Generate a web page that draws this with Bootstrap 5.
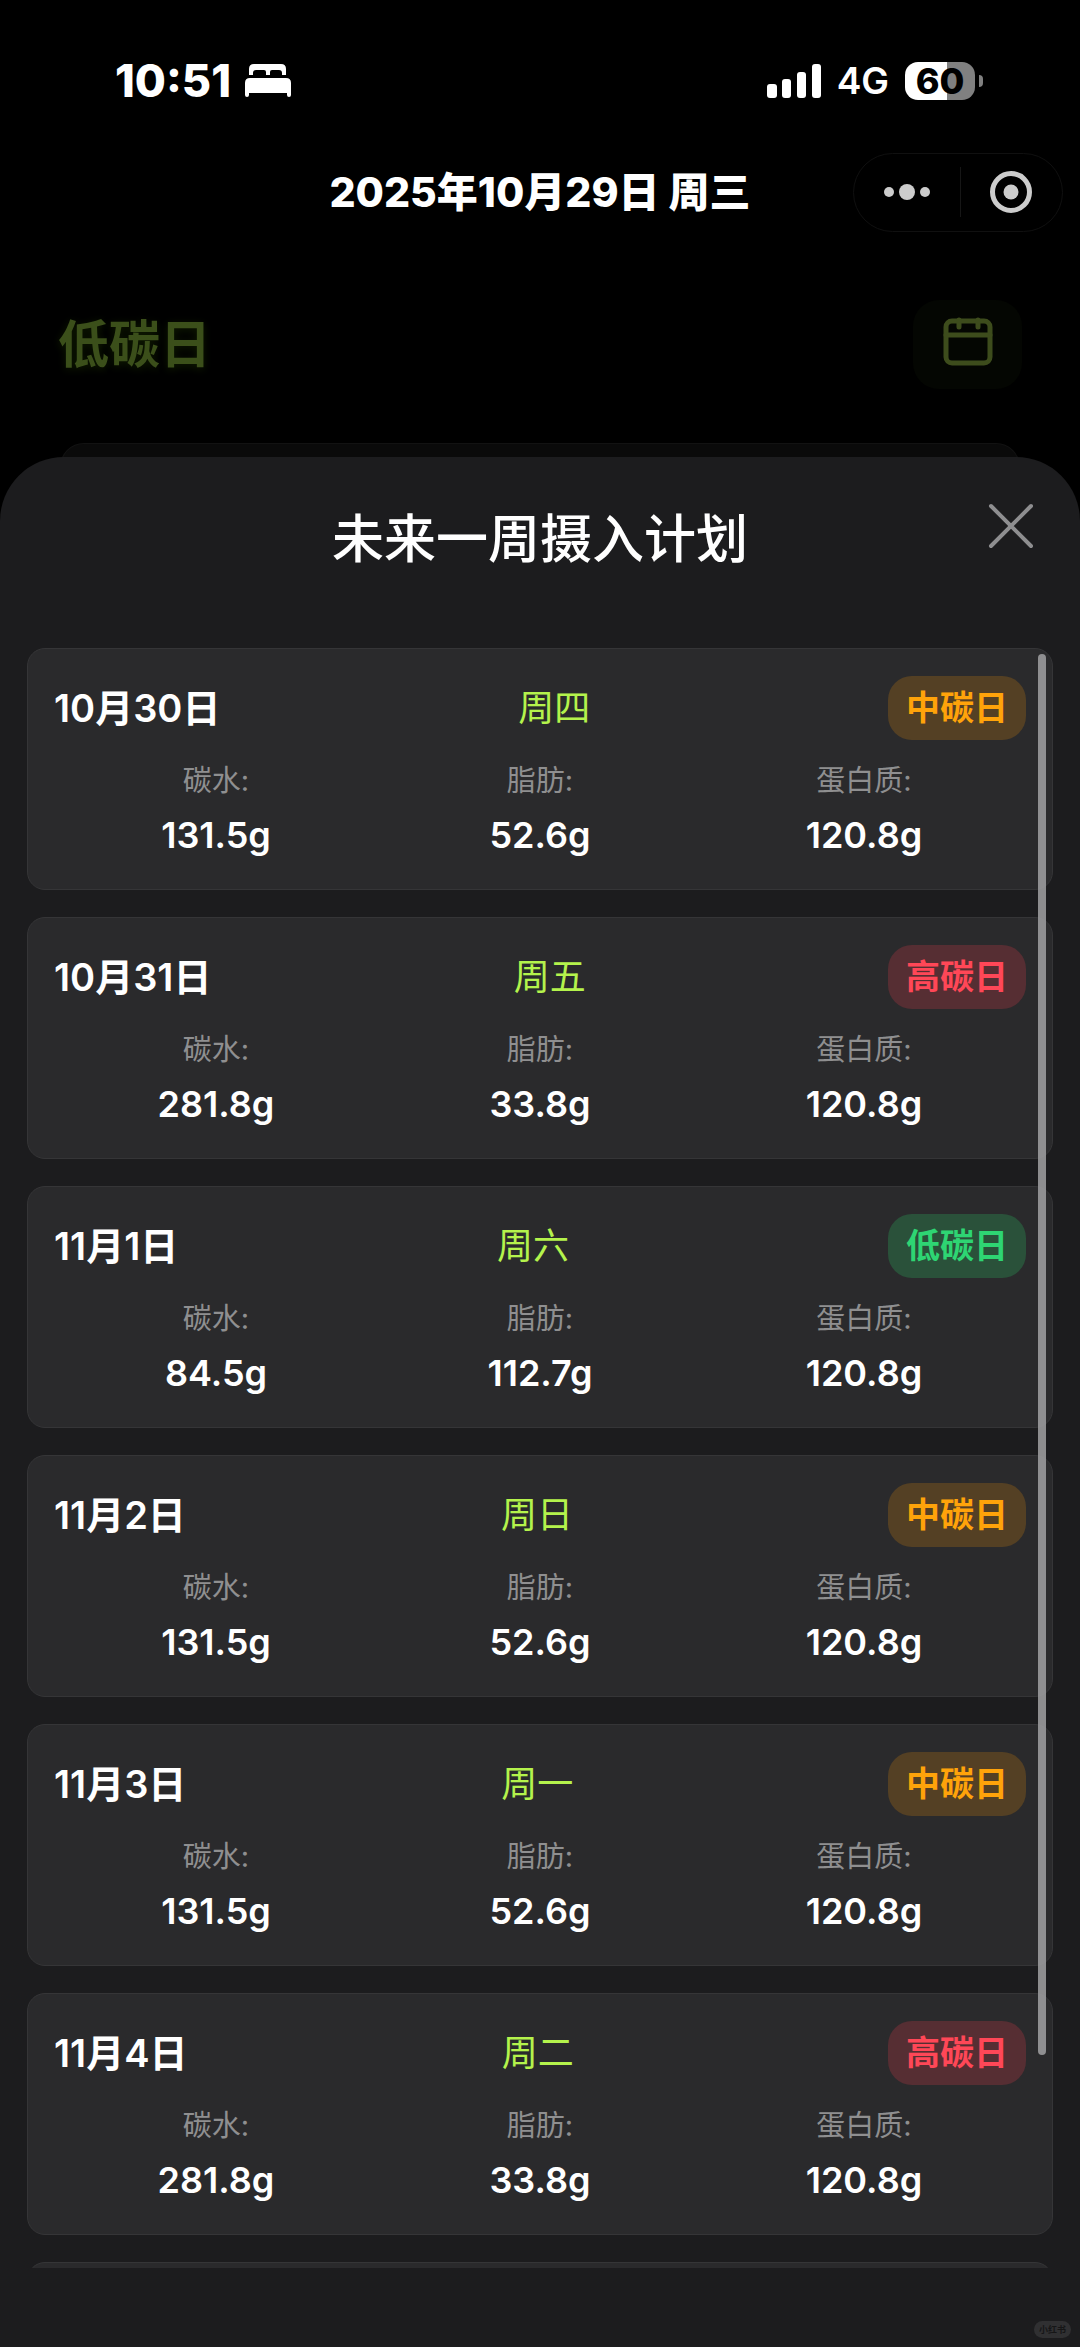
<!DOCTYPE html>
<html lang="zh-CN">
<head>
<meta charset="utf-8">
<meta name="viewport" content="width=device-width, initial-scale=1">
<title>未来一周摄入计划</title>
<link href="https://cdn.jsdelivr.net/npm/bootstrap@5.3.0/dist/css/bootstrap.min.css" rel="stylesheet">
<style>
body{background:#000;color:#fff;font-family:Inter,"Noto Sans CJK SC",sans-serif;font-size:36px;line-height:54px}
button{line-height:1}
.status-bar{height:152px;padding:9px 97px 0 115px}
.clock-group{gap:13px}
.clock{font-size:45px;font-weight:800}
.network{font-size:37px;font-weight:600}
.battery-level{width:70px;height:38px;border-radius:13px;background:linear-gradient(90deg,#fff 60%,#808080 60%);color:#000;font-size:36px;line-height:38px;font-weight:800}
.battery-tip{width:4px;height:12px;border-radius:0 4px 4px 0;background:#808080}
.top-bar{height:80px;padding-right:17px}
.top-bar h1{font-size:41px;line-height:54px;font-weight:800}
.capsule{width:210px;height:79px;border:1px solid #101010;border-radius:40px}
.capsule-line{width:1px;height:50px;background:#161616}
.plain-btn{background:none;border:0;padding:0}
.day-row{padding:68px 58px 0 58px}
.day-row h2{font-size:51px;line-height:78px;font-weight:600;color:#3b4f1a;text-shadow:0 2px 8px rgba(40,70,0,.4)}
.calendar-btn{width:109px;height:89px;border:0;border-radius:26px;background:#040602}
.calendar-btn svg{margin-bottom:6px}
.behind-card{height:34px;margin:54px 60px 0;background:#0a0a0a;border:1px solid #121212;border-bottom:0;border-radius:24px 24px 0 0}
.sheet{margin-top:-20px;background:#1c1c1e;border-radius:64px 64px 0 0;min-height:0}
.sheet-head{height:191px;padding-top:44px}
.sheet-head h2{font-size:52px;line-height:78px;font-weight:500}
.close-btn{right:46px;top:46px}
.plan-wrap{margin:0 27px 79px;min-height:0}
.plan-list{gap:27px;min-height:0}
.plan-item{background:#2a2a2c;border:1px solid #353537;border-radius:18px;padding:27px 26px}
.plan-rest{height:242px}
.plan-date{font-size:38px;font-weight:600}
.weekday{color:#b4f34c}
.carb-tag{font-size:34px;line-height:64px;font-weight:600;border-radius:24px;padding:0 18px}
.tag-mid{color:#ffa30a;background:#544024}
.tag-high{color:#ff4757;background:#562e33}
.tag-low{color:#2ed573;background:#2a513a}
.facts{margin-top:18px}
.facts dt{font-size:29px;line-height:46px;font-weight:400;color:#8f8f90}
.facts dd{margin:4px 0 0;line-height:54px;font-weight:600}
.scroll-thumb{right:7px;top:6px;width:8px;height:1401px;border-radius:4px;background:rgba(160,160,162,.86)}
.source-mark{right:9px;bottom:9px;height:17px;padding:0 5px;border-radius:9px;background:#303032;color:#161617;font-size:9px;line-height:17px;font-weight:600}
</style>
<script defer src="https://cdn.jsdelivr.net/npm/bootstrap@5.3.0/dist/js/bootstrap.bundle.min.js"></script>
</head>
<body>
<div class="d-flex flex-column vh-100 overflow-hidden position-relative">
  <div class="status-bar flex-shrink-0 d-flex align-items-center justify-content-between">
    <div class="clock-group d-flex align-items-center">
      <span class="clock">10:51</span>
      <svg width="48" height="34" viewBox="0 0 48 34" fill="#fff" aria-hidden="true"><path d="M5 11V5Q5 0 10 0H37Q42 0 42 5V11H38V9Q38 6 35 6H28Q26 6 26 8V11H22V8Q22 6 20 6H12Q9 6 9 9V11Z"/><path d="M1 31V19Q1 14 6 14H42Q47 14 47 19V31Q47 33 45 33Q43 33 43 31V29H5V31Q5 33 3 33Q1 33 1 31Z"/></svg>
    </div>
    <div class="d-flex align-items-center">
      <svg class="me-3" width="54" height="34" viewBox="0 0 54 34" fill="#fff" aria-hidden="true"><rect y="20" width="10" height="14" rx="3"/><rect x="15" y="15" width="9" height="19" rx="3"/><rect x="30" y="8" width="9" height="26" rx="3"/><rect x="45" width="9" height="34" rx="3"/></svg>
      <span class="network me-3">4G</span>
      <span class="battery-level text-center">60</span><span class="battery-tip ms-1"></span>
    </div>
  </div>

  <header class="top-bar flex-shrink-0 position-relative d-flex align-items-center justify-content-end">
    <h1 class="position-absolute start-0 end-0 m-0 text-center">2025年10月29日 周三</h1>
    <div class="capsule position-relative d-flex align-items-center">
      <button class="plain-btn flex-fill" type="button" aria-label="更多"><svg width="48" height="44" viewBox="0 0 48 44" fill="#ccc"><circle cx="6" cy="22" r="5"/><circle cx="24" cy="22" r="8"/><circle cx="42" cy="22" r="5"/></svg></button>
      <span class="capsule-line"></span>
      <button class="plain-btn flex-fill" type="button" aria-label="关闭小程序"><svg width="44" height="44" viewBox="0 0 44 44"><circle cx="22" cy="22" r="18.5" fill="none" stroke="#ccc" stroke-width="5"/><circle cx="22" cy="22" r="7.5" fill="#ccc"/></svg></button>
    </div>
  </header>

  <div class="day-row flex-shrink-0 d-flex align-items-center justify-content-between">
    <h2 class="m-0">低碳日</h2>
    <button class="calendar-btn" type="button" aria-label="日历"><svg width="50" height="50" viewBox="0 0 50 50" fill="none" stroke="#3d4c1c" stroke-width="5" stroke-linecap="round"><rect x="3" y="4" width="44" height="42" rx="6"/><path d="M3 18H47M16 3V10M35 3V10"/></svg></button>
  </div>
  <div class="behind-card flex-shrink-0"></div>

  <section class="sheet position-relative flex-fill d-flex flex-column" role="dialog" aria-labelledby="planTitle">
    <div class="sheet-head text-center flex-shrink-0">
      <h2 id="planTitle" class="m-0">未来一周摄入计划</h2>
      <button class="plain-btn close-btn position-absolute" type="button" aria-label="关闭"><svg class="d-block" width="46" height="46" viewBox="0 0 46 46" stroke="#8e8e90" stroke-width="4" stroke-linecap="round"><path d="M3 3L43 43M43 3L3 43"/></svg></button>
    </div>
    <div class="plan-wrap position-relative flex-fill d-flex">
      <ul class="plan-list list-unstyled m-0 d-flex flex-column w-100 overflow-hidden" id="plans"></ul>
      <span class="scroll-thumb position-absolute"></span>
    </div>
    <span class="source-mark position-absolute">小红书</span>
  </section>
</div>
<script>
const kinds = {mid: ['中碳日', '131.5g', '52.6g'], high: ['高碳日', '281.8g', '33.8g'], low: ['低碳日', '84.5g', '112.7g']};
const days = [['10月30日', '周四', 'mid'], ['10月31日', '周五', 'high'], ['11月1日', '周六', 'low'], ['11月2日', '周日', 'mid'], ['11月3日', '周一', 'mid'], ['11月4日', '周二', 'high']];
document.getElementById('plans').innerHTML = days.map(([date, week, kind]) => {
  const [name, carbs, fat] = kinds[kind];
  return `<li class="plan-item flex-shrink-0">
    <div class="d-flex align-items-center justify-content-between">
      <span class="plan-date">${date}</span><span class="weekday">${week}</span><span class="carb-tag tag-${kind}">${name}</span>
    </div>
    <dl class="facts row g-0 mb-0 text-center">
      <div class="col-4"><dt>碳水:</dt><dd>${carbs}</dd></div>
      <div class="col-4"><dt>脂肪:</dt><dd>${fat}</dd></div>
      <div class="col-4"><dt>蛋白质:</dt><dd>120.8g</dd></div>
    </dl>
  </li>`;
}).join('') + '<li class="plan-item plan-rest flex-shrink-0"></li>';
</script>
</body>
</html>
